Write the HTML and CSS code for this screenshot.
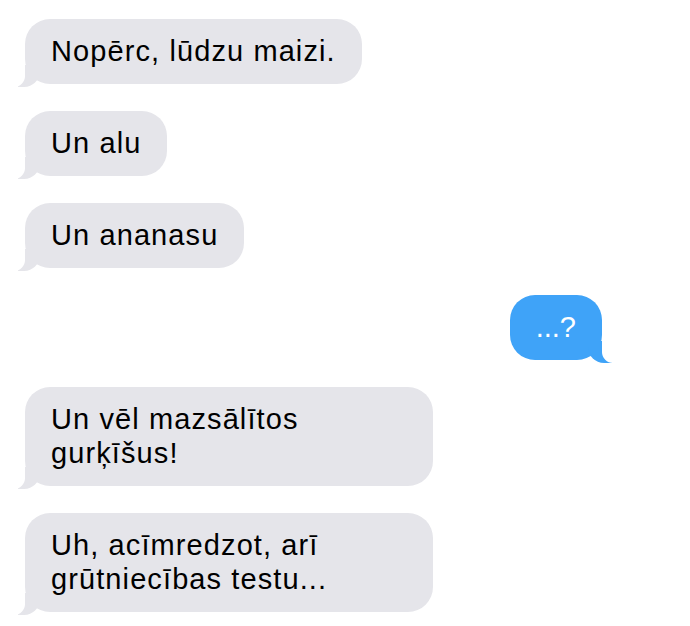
FILE: index.html
```html
<!DOCTYPE html>
<html lang="lv">
<head>
  <meta charset="UTF-8" />
  <meta name="viewport" content="width=device-width, initial-scale=1.0"/>
  <title>Ziņas</title>
  <link rel="stylesheet" href="styles.css">
</head>
<body>

  <div class="chat">
    <p class="msg them">Nopērc, lūdzu maizi.</p>
    <p class="msg them">Un alu</p>
    <p class="msg them">Un ananasu</p>
    <p class="msg me">...?</p>
    <p class="msg them">Un vēl mazsālītos gurķīšus!</p>
    <p class="msg them">Uh, acīmredzot, arī grūtniecības testu...</p>
  </div>

</body>
</html>
```

FILE: styles.css
```css
body {
  margin: 0;
  background: #fff;
  font-family: "Liberation Sans", Arial, sans-serif;
}

.chat {
  width: 577px;
  padding: 19px 25px;
  display: flex;
  flex-direction: column;
  gap: 27px;
}

.msg {
  position: relative;
  margin: 0;
  max-width: 408px;
  box-sizing: border-box;
  padding: 15px 26px 16px;
  border-radius: 25px;
  font-size: 29px;
  line-height: 34px;
  letter-spacing: 1.1px;
}

.them {
  align-self: flex-start;
  background: #e5e5ea;
  color: #000;
}

.me {
  align-self: flex-end;
  background: #3fa3f8;
  color: #fff;
  letter-spacing: 0;
}

.msg::before,
.msg::after {
  content: "";
  position: absolute;
  bottom: -3px;
  height: 22px;
}

.them::before {
  left: -7px;
  width: 22px;
  background: #e5e5ea;
  border-bottom-right-radius: 16px;
}

.them::after {
  left: -27px;
  width: 27px;
  background: #fff;
  border-bottom-right-radius: 11px;
}

.me::before {
  right: -10px;
  width: 24px;
  background: #3fa3f8;
  border-bottom-left-radius: 16px;
}

.me::after {
  right: -30px;
  width: 30px;
  background: #fff;
  border-bottom-left-radius: 11px;
}
```
